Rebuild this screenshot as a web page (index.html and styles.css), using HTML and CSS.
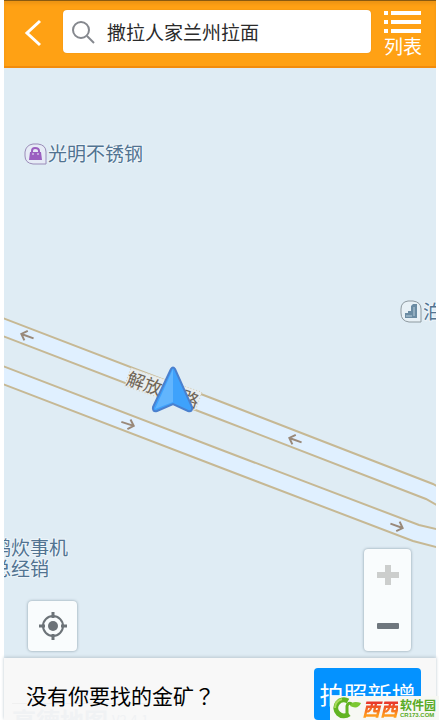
FILE: index.html
```html
<!DOCTYPE html>
<html lang="zh-CN">
<head>
  <meta charset="UTF-8">
  <meta name="viewport" content="width=device-width, initial-scale=1.0">
  <title>撒拉人家兰州拉面</title>
  <link rel="stylesheet" href="styles.css">
</head>
<body>

  <div class="app">
    <header class="top-bar">
      <button type="button" class="back-btn" aria-label="返回">
        <svg width="18" height="28" viewBox="0 0 18 28"><path d="M16 2 L3 14 L16 26" fill="none" stroke="#fff" stroke-width="3"/></svg>
      </button>
      <div class="search-box">
        <svg width="24" height="24" viewBox="0 0 24 24" fill="none" stroke="#85888e" stroke-width="2">
          <circle cx="10" cy="10" r="8"/>
          <path d="M16 16 L23 23"/>
        </svg>
        <input type="text" aria-label="搜索" value="撒拉人家兰州拉面">
      </div>
      <button type="button" class="list-btn">
        <svg width="37" height="22" viewBox="0 0 37 22" fill="#fff">
          <path d="M0 0h4v4H0zM7 0h30v4H7zM0 9h4v4H0zM7 9h30v4H7zM0 18h4v4H0zM7 18h30v4H7z"/>
        </svg>
        <span>列表</span>
      </button>
    </header>

    <main class="map">
      <svg class="map-canvas" viewBox="4 68 432 590" preserveAspectRatio="xMidYMid slice">
        <defs>
          <g id="way-arrow" fill="none" stroke="#99897a" stroke-width="2">
            <path d="M-7 0 H6 M1 -5 L6 0 L1 5"/>
          </g>
        </defs>

        <!-- Roads -->
        <path class="road" d="M4 319 L219 401 L433 484 L440 488 L440 507 L426 499 L219 419 L4 337 Z"/>
        <path class="road" d="M4 367 L219 449 L419 525 L440 530 L440 548 L413 541 L219 467 L4 385 Z"/>
        <path class="road-edge" d="M0 317 L219 401 L433 484 L440 488"/>
        <path class="road-edge" d="M0 335 L219 419 L426 499 L440 507"/>
        <path class="road-edge" d="M0 365 L219 449 L419 525 L440 530"/>
        <path class="road-edge" d="M0 383 L219 467 L413 541 L440 548"/>

        <use href="#way-arrow" transform="translate(27 336) rotate(200)"/>
        <use href="#way-arrow" transform="translate(128 424) rotate(18)"/>
        <use href="#way-arrow" transform="translate(295 440) rotate(200)"/>
        <use href="#way-arrow" transform="translate(397 526) rotate(20)"/>

        <!-- Road name -->
        <g transform="translate(126 382) rotate(19)">
          <rect class="road-name-bg" x="0" y="-15" width="75" height="19"/>
          <text class="road-name" x="0" y="2">解放</text>
          <text class="road-name" x="57" y="2">路</text>
        </g>

        <!-- Current position -->
        <path d="M171 369 L153 407 Q152 412 157 411 L173 404 L188 411 Q193 412 192 407 L175 369 Q173 366 171 369 Z" fill="#3ea2fc" stroke="#4a80ce" stroke-width="2"/>
        <path d="M173 369 L155 409 L173 402 Z" fill="#62b5fd"/>

        <!-- Places -->
        <path d="M33 144 H38 Q46 145 46 152 V164 H33 Q25 163 25 156 V152 Q26 145 33 144 Z" fill="#e6ebf6" stroke="#9a8bb8"/>
        <path d="M30 152 H41 L42 160 H29 Z" fill="#9b5fc0"/>
        <path d="M32 153 V151 Q32 148 35 148 Q39 148 39 151 V153" fill="none" stroke="#9b5fc0" stroke-width="2"/>
        <path d="M33 153 V155 M38 153 V155" stroke="#e6ebf6"/>
        <text class="place" x="48" y="161">光明不锈钢</text>

        <path d="M408 301 H413 Q421 302 421 309 V322 H409 Q401 321 401 313 V309 Q401 302 408 301 Z" fill="#e8f1f6" stroke="#8e999f"/>
        <path d="M411 306 L413 304 H417 V318 H405 V313 H408 V311 H411 Z" fill="#6b8ca3"/>
        <path d="M406 316 H412 M414 307 V316" stroke="#b9cedb"/>
        <text class="place" x="423" y="319">泊</text>

        <text class="place" x="-8" y="555">鹅炊事机</text>
        <text class="place" x="-8" y="576">总经销</text>
      </svg>

      <div class="map-tools">
        <button type="button" class="locate-btn" aria-label="定位">
          <svg width="28" height="28" viewBox="0 0 28 28" fill="none" stroke="#6c7378">
            <circle cx="14" cy="14" r="10" stroke-width="2"/>
            <circle cx="14" cy="14" r="5" fill="#6c7378" stroke="none"/>
            <path d="M14 0V6M14 22V28M0 14H6M22 14H28" stroke-width="3"/>
          </svg>
        </button>
        <div class="zoom">
          <button type="button" aria-label="放大" disabled>
            <svg width="22" height="20" viewBox="0 0 22 20" fill="#cccecd"><path d="M8 0h6v7h8v6h-8v7H8v-7H0V7h8z"/></svg>
          </button>
          <button type="button" aria-label="缩小">
            <svg width="22" height="6" viewBox="0 0 22 6"><rect width="22" height="6" rx="1" fill="#6f777e"/></svg>
          </button>
        </div>
      </div>
    </main>

    <footer class="bottom-bar">
      <div class="map-credit">
        <span class="credit-name">高德地图</span>
        <span class="credit-version">V2.4.1</span>
      </div>
      <p>没有你要找的金矿<span lang="zh-TW">？</span></p>
      <button type="button" class="photo-btn">拍照新增</button>
    </footer>
  </div>

  <div class="watermark">
    <svg width="30" height="22" viewBox="0 0 30 22" fill="none">
      <path d="M16 4 A8 8 0 1 0 17 17" stroke="#62b422" stroke-width="5"/>
      <path d="M10 2 Q3 4 3 11" stroke="#a9da5c" stroke-width="2"/>
      <path d="M15 17 V9 Q16 5 20 7" stroke="#62b422" stroke-width="3"/>
      <path d="M18 9 Q20 3 29 6 Q26 13 18 9 Z" fill="#7cc832"/>
    </svg>
    <strong>西西</strong>
    <div class="watermark-site">
      <span>软件园</span>
      <small>CR173.COM</small>
    </div>
  </div>

</body>
</html>
```

FILE: styles.css
```css
/* Reset default styles */
* {
  margin: 0;
  padding: 0;
  box-sizing: border-box;
}

body {
  font-family: "Noto Sans CJK SC", sans-serif;
  background: #fff;
  height: 100vh;
  overflow: hidden;
}

button {
  font-family: inherit;
  border: none;
  background: none;
  cursor: pointer;
}

svg {
  display: block;
}

.app {
  display: flex;
  flex-direction: column;
  height: 100vh;
  margin: 0 3px 0 4px;
}

/* Top Bar */
.top-bar {
  display: flex;
  align-items: flex-start;
  height: 68px;
  padding: 9px 14px 0 20px;
  background: #ffa114;
  border-top: 1px solid #8a5a10;
  border-bottom: 2px solid #f28c0c;
  box-shadow: inset 0 3px 3px #ee9514;
}

.back-btn {
  width: 39px;
  padding: 9px 0 0 0;
}

.search-box {
  flex: 1;
  display: flex;
  align-items: center;
  gap: 12px;
  min-width: 0;
  height: 43px;
  padding: 0 8px;
  background: #fff;
  border-radius: 4px;
  box-shadow: 0 0 1px #c97a10;
}

.search-box svg {
  flex: none;
}

.search-box input {
  flex: 1;
  min-width: 0;
  height: 30px;
  font-family: inherit;
  font-size: 19px;
  color: #2b2b2b;
  border: none;
  outline: none;
  background: transparent;
}

.list-btn {
  display: flex;
  flex-direction: column;
  align-items: center;
  gap: 2px;
  margin-left: 13px;
  padding-top: 1px;
  font-size: 19px;
  line-height: 22px;
  color: #fff;
}

/* Map */
.map {
  flex: 1;
  position: relative;
  display: flex;
  min-height: 0;
  background: #dfecf4;
  overflow: hidden;
}

.map-canvas {
  position: absolute;
  width: 100%;
  height: 100%;
}

.road {
  fill: #e0f0ff;
}

.road-edge {
  fill: none;
  stroke: #c6b894;
  stroke-width: 2;
}

.road-name-bg {
  fill: #e8edee;
  stroke: #d3ccb6;
  stroke-dasharray: 1 2;
}

.road-name {
  font-size: 18px;
  fill: #6f6455;
}

.place {
  font-size: 19px;
  fill: #517391;
  stroke: #edf5fa;
  stroke-width: 2;
  paint-order: stroke;
}

/* Map Buttons */
.map-tools {
  position: relative;
  flex: 1;
  display: flex;
  align-items: flex-end;
  justify-content: space-between;
  padding: 0 25px 7px 24px;
}

.locate-btn,
.zoom {
  background: #f9fcfd;
  border-radius: 4px;
  box-shadow: 0 0 3px #8698a4;
}

.locate-btn {
  display: grid;
  place-items: center;
  width: 49px;
  height: 50px;
}

.zoom {
  display: flex;
  flex-direction: column;
  width: 47px;
  height: 102px;
}

.zoom button {
  flex: 1;
  display: grid;
  place-items: center;
}

/* Bottom Bar */
.bottom-bar {
  position: relative;
  display: flex;
  align-items: flex-start;
  justify-content: space-between;
  height: 62px;
  padding: 10px 15px 0 22px;
  background: #f8f8f8;
  box-shadow: 0 -1px 3px #bcc8d0;
  overflow: hidden;
}

.bottom-bar p {
  position: relative;
  padding-top: 11px;
  font-size: 21px;
  line-height: 32px;
  color: #000;
}

.bottom-bar p span {
  font-family: "Noto Sans CJK TC", sans-serif;
}

.photo-btn {
  width: 107px;
  height: 52px;
  font-size: 24px;
  line-height: 52px;
  color: #fff;
  background: #0492ff;
  border-radius: 4px;
}

/* Faded map provider name behind the bar */
.map-credit {
  position: absolute;
  left: 8px;
  top: 45px;
  display: flex;
  gap: 4px;
  border-top: 1px solid #f0f0f0;
  color: #f0f2f4;
  line-height: 32px;
}

.credit-name {
  font-size: 24px;
  font-weight: bold;
}

.credit-version {
  font-size: 13px;
}

/* Site Watermark */
.watermark {
  position: absolute;
  right: 0;
  bottom: 0;
  display: flex;
  align-items: center;
  width: 109px;
  height: 24px;
  padding-left: 2px;
  background: #f7f8f4;
}

.watermark strong {
  font-size: 18px;
  font-weight: 900;
  font-style: italic;
  line-height: 24px;
  color: transparent;
  background: linear-gradient(#e8382a 30%, #ff9a1c 80%);
  background-clip: text;
}

.watermark-site {
  display: flex;
  flex-direction: column;
  padding-left: 2px;
  font-weight: bold;
  color: #58aa24;
}

.watermark-site span {
  font-size: 12px;
  line-height: 14px;
}

.watermark-site small {
  font-family: "Liberation Sans", sans-serif;
  font-size: 6px;
  line-height: 7px;
}
```
